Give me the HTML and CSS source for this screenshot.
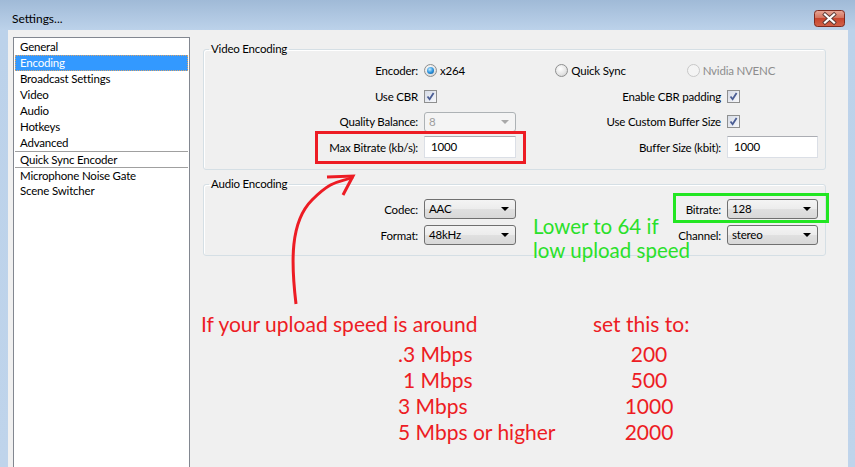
FILE: index.html
```html
<!DOCTYPE html>
<html>
  <head>
    <meta name="viewport" content="width=device-width, initial-scale=1.0" />
    <link rel="stylesheet" href="styles.css">
  </head>
  <body>
    <div class="window">
      <header class="titlebar">
        <span class="title">Settings...</span>
        <button class="close-btn" aria-label="Close">
          <svg width="31" height="17" viewBox="0 0 31 17">
            <defs>
              <linearGradient id="closeGrad" x1="0" y1="0" x2="0" y2="1">
                <stop offset="0" stop-color="#e8a898" />
                <stop offset="0.45" stop-color="#d47560" />
                <stop offset="0.5" stop-color="#c8452e" />
                <stop offset="1" stop-color="#d2634a" />
              </linearGradient>
            </defs>
            <rect x="0.5" y="0.5" width="30" height="16" rx="3" fill="url(#closeGrad)" stroke="#7e2a1f" />
            <path d="M11 4.5 L20 12.5 M20 4.5 L11 12.5" stroke="#5a3a36" stroke-width="4" stroke-linecap="square" />
            <path d="M11 4.5 L20 12.5 M20 4.5 L11 12.5" stroke="#ffffff" stroke-width="2.2" stroke-linecap="square" />
          </svg>
        </button>
      </header>

      <div class="client">
        <ul class="nav-list">
          <li>General</li>
          <li class="selected">Encoding</li>
          <li>Broadcast Settings</li>
          <li>Video</li>
          <li>Audio</li>
          <li>Hotkeys</li>
          <li>Advanced</li>
          <li class="sep">Quick Sync Encoder</li>
          <li class="sep">Microphone Noise Gate</li>
          <li>Scene Switcher</li>
        </ul>

        <div class="panel">
          <fieldset class="group video">
            <legend>Video Encoding</legend>
            <div class="form-grid">
              <label class="field-label">Encoder:</label>
              <div class="radio-row">
                <span class="choice"><span class="radio checked"></span>x264</span>
                <span class="choice"><span class="radio"></span>Quick Sync</span>
                <span class="choice disabled"><span class="radio"></span>Nvidia NVENC</span>
              </div>

              <label class="field-label">Use CBR</label>
              <div><span class="checkbox"><svg width="11" height="11" viewBox="0 0 11 11"><path d="M2.5 5.5 L4.6 8.2 L8.6 2" fill="none" stroke="#4a5d94" stroke-width="1.8" /></svg></span></div>
              <label class="field-label">Enable CBR padding</label>
              <div><span class="checkbox"><svg width="11" height="11" viewBox="0 0 11 11"><path d="M2.5 5.5 L4.6 8.2 L8.6 2" fill="none" stroke="#4a5d94" stroke-width="1.8" /></svg></span></div>

              <label class="field-label">Quality Balance:</label>
              <div class="combo disabled">8</div>
              <label class="field-label">Use Custom Buffer Size</label>
              <div><span class="checkbox"><svg width="11" height="11" viewBox="0 0 11 11"><path d="M2.5 5.5 L4.6 8.2 L8.6 2" fill="none" stroke="#4a5d94" stroke-width="1.8" /></svg></span></div>

              <label class="field-label">Max Bitrate (kb/s):</label>
              <div class="textbox">1000</div>
              <label class="field-label">Buffer Size (kbit):</label>
              <div class="textbox">1000</div>
            </div>
          </fieldset>

          <fieldset class="group audio">
            <legend>Audio Encoding</legend>
            <div class="form-grid">
              <label class="field-label">Codec:</label>
              <div class="combo">AAC</div>
              <label class="field-label">Bitrate:</label>
              <div class="combo">128</div>

              <label class="field-label">Format:</label>
              <div class="combo">48kHz</div>
              <label class="field-label">Channel:</label>
              <div class="combo">stereo</div>
            </div>
          </fieldset>

          <div class="notes">
            <div class="note-head">If your upload speed is around</div>
            <div class="note-head">set this to:</div>
            <div class="note-speed">.3 Mbps</div>
            <div class="note-value">200</div>
            <div class="note-speed indent">1 Mbps</div>
            <div class="note-value">500</div>
            <div class="note-speed">3 Mbps</div>
            <div class="note-value">1000</div>
            <div class="note-speed">5 Mbps or higher</div>
            <div class="note-value">2000</div>
          </div>
        </div>
      </div>

      <!-- annotations drawn over the dialog -->
      <div class="mark red-mark"></div>
      <div class="mark green-mark"></div>
      <div class="green-note">Lower to 64 if<br>low upload speed</div>
      <svg class="arrow" width="855" height="467" viewBox="0 0 855 467">
        <path d="M296 304 C291 262 290 222 312 200 S340 183 353 177" fill="none" stroke="#ed1c24" stroke-width="3" />
        <path d="M327 177 L353 176 L343 195" fill="none" stroke="#ed1c24" stroke-width="3" />
      </svg>
    </div>
  </body>
</html>
```

FILE: styles.css
```css
:root {
  --frame: #bfd4eb;
  --client: #f0f0f0;
  --note-red: #ed1c24;
  --note-green: #2ae02a;
  --text: #000;
}

* {
  box-sizing: border-box;
}

body {
  margin: 0;
  overflow: hidden;
  font-family: Lato, "Liberation Sans", sans-serif;
  font-size: 11.5px;
  letter-spacing: -0.2px;
  color: var(--text);
}

.window {
  position: relative;
  width: 855px;
  height: 467px;
  overflow: hidden;
  display: flex;
  flex-direction: column;
  background: linear-gradient(#a0bad7 0, #bcd2ea 30px, var(--frame) 100%);
}

/* Title bar */
.titlebar {
  height: 30px;
  flex: none;
  display: flex;
  align-items: center;
  justify-content: space-between;
  padding: 6px 10px 0 12px;
}

.title {
  font-size: 12px;
  letter-spacing: 0;
}

.close-btn {
  width: 31px;
  height: 17px;
  padding: 0;
  border: none;
  background: none;
  display: block;
}

.close-btn svg {
  display: block;
}

/* Client area */
.client {
  flex: 1;
  margin: 0 7px 0 8px;
  background: var(--client);
  display: flex;
  align-items: flex-start;
  padding: 7px 0 0 5px;
}

.nav-list {
  list-style: none;
  margin: 0;
  padding: 1px;
  width: 177px;
  height: 460px;
  flex: none;
  background: #fff;
  border: 1px solid #828790;
}

.nav-list li {
  height: 16px;
  line-height: 16px;
  padding-left: 5px;
  white-space: nowrap;
}

.nav-list li.selected {
  background: #3399ff;
  color: #fff;
  outline: 1px dotted #d9a46a;
  outline-offset: -1px;
}

.nav-list li.sep {
  border-top: 1px solid #a0a0a0;
  line-height: 15px;
}

.panel {
  margin-left: 13px;
  width: 623px;
  padding-top: 4px;
}

/* Group boxes */
.group {
  margin: 0;
  padding: 0 7px 9px 0;
  min-width: 0;
  border: 1px solid #d5dfe5;
  border-radius: 3px;
  box-shadow: inset 1px 1px 0 #fff;
}

.group legend {
  margin-left: 5px;
  padding: 0 2px;
  line-height: 16px;
}

.group.audio {
  margin-top: 6px;
  padding-bottom: 7px;
}

.form-grid {
  display: grid;
  grid-template-columns: 214px 92px 199px 91px;
  grid-auto-rows: 25.5px;
  column-gap: 6px;
  align-items: center;
  padding-top: 1px;
}

.audio .form-grid {
  grid-auto-rows: 26px;
  padding-top: 4px;
}

.field-label {
  text-align: right;
  white-space: nowrap;
}

.radio-row {
  grid-column: 2 / 5;
  display: flex;
}

.choice {
  width: 132px;
  display: flex;
  align-items: center;
  gap: 3px;
  white-space: nowrap;
}

.choice.disabled {
  color: #8d8d8d;
}

.radio {
  width: 13px;
  height: 13px;
  border-radius: 50%;
  border: 1px solid #8e8f8f;
  background: radial-gradient(circle at 40% 35%, #fff 0, #e6e6e6 55%, #c8c8c8 100%);
  display: grid;
  place-items: center;
}

.choice.disabled .radio {
  border-color: #c8c8c8;
  background: #f4f4f4;
}

.radio.checked::after {
  content: "";
  width: 7px;
  height: 7px;
  border-radius: 50%;
  background: radial-gradient(circle at 40% 35%, #c6ecff 0, #2f96e0 50%, #0c4c86 100%);
}

.checkbox {
  width: 13px;
  height: 13px;
  border: 1px solid #8e8f8f;
  background: linear-gradient(135deg, #d6dbe6, #f7f8fb);
  display: grid;
  place-items: center;
}

.checkbox svg {
  display: block;
}

.combo {
  position: relative;
  height: 20px;
  line-height: 18px;
  padding-left: 4px;
  border: 1px solid #707070;
  border-radius: 3px;
  background: linear-gradient(#f4f4f4 0, #ececec 50%, #e0e0e0 51%, #d8d8d8 100%);
}

.combo::after {
  content: "";
  position: absolute;
  right: 6px;
  top: 7px;
  border-left: 4px solid transparent;
  border-right: 4px solid transparent;
  border-top: 4px solid #000;
}

.combo.disabled {
  border-color: #adb2b5;
  background: #f4f4f4;
  color: #9d9d9d;
}

.combo.disabled::after {
  border-top-color: #a8a8a8;
}

.textbox {
  height: 22px;
  line-height: 20px;
  padding-left: 6px;
  background: #fff;
  border: 1px solid #dbdfe6;
  border-top-color: #abadb3;
}

/* Hand-written notes */
.notes {
  margin: 55px 0 0 -2px;
  display: grid;
  grid-template-columns: 392px 112px;
  grid-template-rows: 30px;
  grid-auto-rows: 26px;
  font-size: 21px;
  line-height: 26px;
  letter-spacing: 0;
  color: var(--note-red);
  white-space: nowrap;
}

.note-speed {
  padding-left: 197px;
}

.note-speed.indent {
  padding-left: 202px;
}

.note-value {
  text-align: center;
}

/* Annotations */
.mark {
  position: absolute;
  border-style: solid;
  border-width: 3px;
}

.red-mark {
  left: 315px;
  top: 131px;
  width: 211px;
  height: 33px;
  border-color: var(--note-red);
}

.green-mark {
  left: 673px;
  top: 193px;
  width: 156px;
  height: 30px;
  border-color: #22e622;
}

.green-note {
  position: absolute;
  left: 533px;
  top: 214px;
  font-size: 20.5px;
  line-height: 24px;
  letter-spacing: 0;
  color: var(--note-green);
  white-space: nowrap;
}

.arrow {
  position: absolute;
  left: 0;
  top: 0;
  pointer-events: none;
}
```
